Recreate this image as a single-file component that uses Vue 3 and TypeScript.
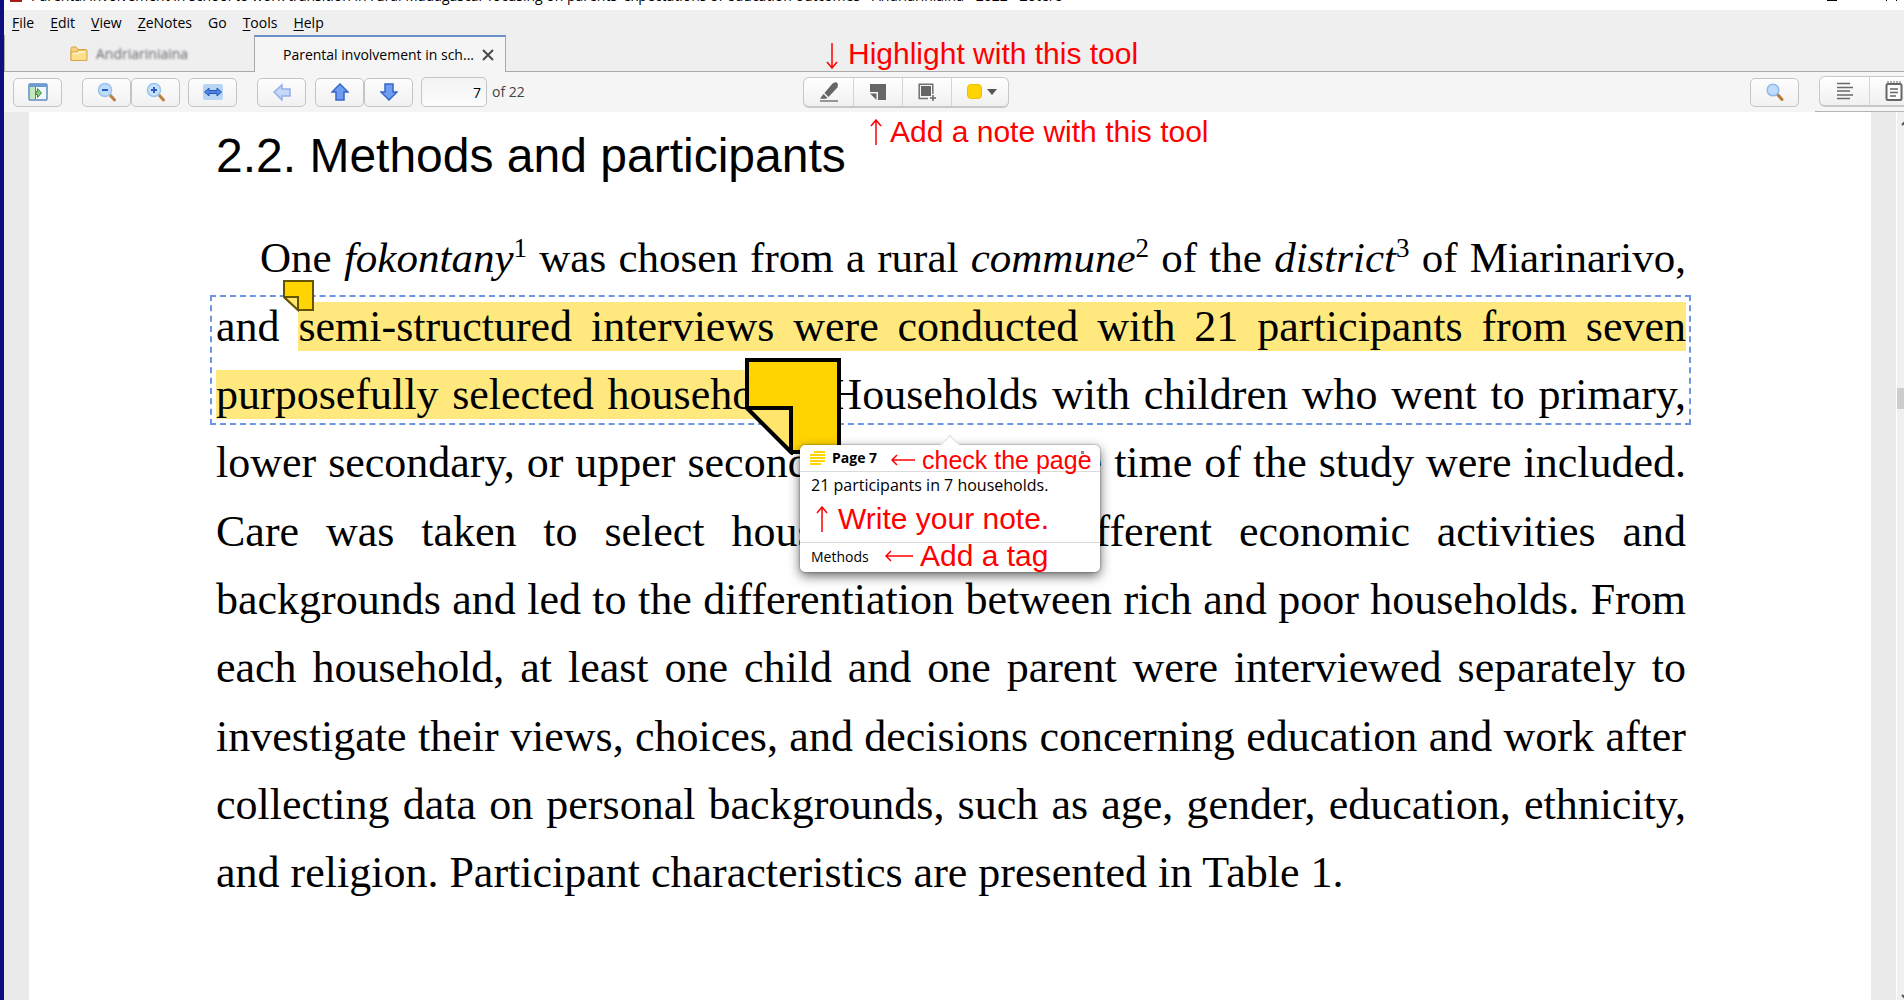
<script setup lang="ts">
import { ref } from 'vue'

interface MenuEntry {
  key: string
  rest: string
}

const menu: MenuEntry[] = [
  { key: 'F', rest: 'ile' },
  { key: 'E', rest: 'dit' },
  { key: 'V', rest: 'iew' },
  { key: 'Z', rest: 'eNotes' },
  { key: '', rest: 'Go' },
  { key: 'T', rest: 'ools' },
  { key: 'H', rest: 'elp' },
]

const pageNumber = ref('7')

const closingLines: string[] = [
  'lower secondary, or upper secondary school at the time of the study were included.',
  'Care was taken to select households with different economic activities and',
  'backgrounds and led to the differentiation between rich and poor households. From',
  'each household, at least one child and one parent were interviewed separately to',
  'investigate their views, choices, and decisions concerning education and work after',
  'collecting data on personal backgrounds, such as age, gender, education, ethnicity,',
  'and religion. Participant characteristics are presented in Table 1.',
]
</script>

<template>
  <div class="app">
    <header class="titlebar">
      <span class="app-icon"></span>
      <span class="title">Parental involvement in school to work transition in rural Madagascar focusing on parents’ expectations of education outcomes - Andriariniaina - 2022 - Zotero</span>
      <span class="minimise"></span>
      <span class="maximise"></span>
    </header>

    <nav class="menubar">
      <a v-for="m in menu" :key="m.rest" href="#"><u v-if="m.key">{{ m.key }}</u>{{ m.rest }}</a>
    </nav>

    <div class="tabs">
      <button class="tab library">
        <svg width="18" height="16" viewBox="0 0 18 16">
          <path d="M1 14.500V2.500Q1 1 2.500 1H6l2 2.500h7.500V5" fill="#f6d27c" stroke="#d9a441" />
          <path d="M1 14.500V6h6l1.500-2H17v10.500z" fill="#fbe08c" stroke="#d9a441" />
          <path d="M3 7.500h5L9.500 6H15" fill="none" stroke="#fff6cf" stroke-width="1.500" />
        </svg>
        <span class="blurred">Andriariniaina</span>
      </button>
      <div class="tab active">
        <span>Parental involvement in sch...</span>
        <button class="close" aria-label="Close tab">
          <svg width="12" height="12" viewBox="0 0 12 12"><path d="M1 1l10 10M11 1L1 11" stroke="#4a4a4a" stroke-width="2" /></svg>
        </button>
      </div>
      <div class="tab-rest"></div>
    </div>

    <div class="toolbar">
      <button class="btn" aria-label="Toggle sidebar">
        <svg width="20" height="18" viewBox="0 0 20 18">
          <rect x="1" y="1" width="18" height="16" rx="1" fill="#f2f7fc" stroke="#5f8cc0" stroke-width="1.500" />
          <path d="M1 2.500h18" stroke="#6d9bd0" stroke-width="3" />
          <rect x="2" y="4" width="5" height="12" fill="#c4e8bb" />
          <path d="M7.500 4v12" stroke="#4b9648" />
          <path d="M8 8.500h1.500V5.500l4 4.500-4 4.500v-3H8z" fill="#8ccb80" stroke="#43913f" />
        </svg>
      </button>
      <div class="pair zoom">
        <button class="btn" aria-label="Zoom out">
          <svg width="20" height="20" viewBox="0 0 20 20">
            <path d="M13 13l4.500 5" stroke="#bd8045" stroke-width="3" stroke-linecap="round" />
            <circle cx="8" cy="8" r="6.500" fill="#bfdcfa" stroke="#9dc4ef" stroke-width="1.500" />
            <path d="M5 8h6" stroke="#285fc0" stroke-width="2" />
          </svg>
        </button>
        <button class="btn" aria-label="Zoom in">
          <svg width="20" height="20" viewBox="0 0 20 20">
            <path d="M13 13l4.500 5" stroke="#bd8045" stroke-width="3" stroke-linecap="round" />
            <circle cx="8" cy="8" r="6.500" fill="#c8e0fa" stroke="#9dc4ef" stroke-width="1.500" />
            <path d="M5 8h6M8 5v6" stroke="#285fc0" stroke-width="2" />
          </svg>
        </button>
      </div>
      <button class="btn fit" aria-label="Fit width">
        <svg width="20" height="18" viewBox="0 0 20 18">
          <rect x="0" y="1" width="20" height="16" rx="2" fill="#b9d5f5" />
          <path d="M1.500 9L6 5v2.500h8V5l4.500 4-4.500 4v-2.500H6V13z" fill="#4f83dc" stroke="#2357b8" />
        </svg>
      </button>
      <button class="btn back" aria-label="Back">
        <svg width="18" height="18" viewBox="0 0 18 18"><path d="M1 9l8-7v4h8v7H9v4z" fill="#c6d8f7" stroke="#93aee6" stroke-width="1.500" /></svg>
      </button>
      <div class="pair pages">
        <button class="btn" aria-label="Previous page">
          <svg width="18" height="18" viewBox="0 0 18 18"><path d="M9 1l8 8h-4v8H5V9H1z" fill="#6f9df0" stroke="#3467c9" stroke-width="1.500" /></svg>
        </button>
        <button class="btn" aria-label="Next page">
          <svg width="18" height="18" viewBox="0 0 18 18"><path d="M9 17L1 9h4V1h8v8h4z" fill="#6f9df0" stroke="#3467c9" stroke-width="1.500" /></svg>
        </button>
      </div>
      <input id="page" v-model="pageNumber" class="page-input" type="text" />
      <label for="page" class="page-label">of 22</label>

      <div class="group">
        <button aria-label="Highlight text">
          <svg width="20" height="20" viewBox="0 0 20 20">
            <path d="M13.500 1.500L17 0l2 2-.500 3.500L9.500 15l-4-4z" fill="#666" />
            <path d="M4.500 12l4 4-2 .800H1z" fill="#666" />
            <path d="M1 19h18" stroke="#777" stroke-width="1.500" />
          </svg>
        </button>
        <button aria-label="Add note">
          <svg width="16" height="16" viewBox="0 0 16 16"><path d="M0 0h16v16H8V8H0z" fill="#666" /><path d="M0 9.500h6.500V16z" fill="#666" /></svg>
        </button>
        <button aria-label="Select area">
          <svg width="18" height="18" viewBox="0 0 18 18">
            <path d="M10 15.500H1.200V1.200h13.600V11" fill="none" stroke="#707070" stroke-width="1.500" />
            <rect x="3" y="3" width="10" height="10" fill="#666" />
            <path d="M15 12v6M12 15h6" stroke="#666" stroke-width="1.500" />
          </svg>
        </button>
        <button class="colour" aria-label="Annotation colour">
          <span class="swatch"></span>
          <svg width="10" height="6" viewBox="0 0 10 6"><path d="M0 0h10L5 6z" fill="#555" /></svg>
        </button>
      </div>

      <div class="right-tools">
        <button class="btn" aria-label="Find">
          <svg width="18" height="18" viewBox="0 0 18 18">
            <path d="M12 12l4 4.500" stroke="#b77a33" stroke-width="3" stroke-linecap="round" />
            <circle cx="7" cy="7" r="5.800" fill="#bfdcfa" stroke="#8fb9ea" stroke-width="1.500" />
          </svg>
        </button>
        <div class="side-switch">
          <div class="group side">
            <button aria-label="Item info">
              <svg width="16" height="18" viewBox="0 0 16 18">
                <path d="M0 1.500h13M0 5.500h16M0 9h13M0 13h16M0 16.500h13" stroke="#6a6a6a" stroke-width="1.500" />
              </svg>
            </button>
            <button aria-label="Notes">
              <svg width="18" height="20" viewBox="0 0 18 20">
                <rect x="1.500" y="3" width="15" height="16" rx="1.500" fill="#fff" stroke="#666" stroke-width="2" />
                <path d="M3 0v4M6 0v4M9 0v4M12 0v4M15 0v4" stroke="#666" />
                <path d="M5 8h8M5 11.500h8M5 15h6" stroke="#666" stroke-width="1.500" />
              </svg>
            </button>
          </div>
        </div>
      </div>
    </div>

    <main class="viewer">
      <article class="paper">
        <h1>2.2. Methods and participants</h1>
        <p>
          <span class="line first">One <i>fokontany</i><sup>1</sup> was chosen from a rural <i>commune</i><sup>2</sup> of the <i>district</i><sup>3</sup> of Miarinarivo,</span>
          <span class="line">and <mark>semi-structured interviews were conducted with 21 participants from seven</mark></span>
          <span class="line"><mark>purposefully selected households.</mark> Households with children who went to primary,</span>
          <span v-for="l in closingLines" :key="l" class="line">{{ l }}</span>
        </p>
        <div class="selection"></div>
      </article>
      <div class="scrollbar">
        <svg width="7" height="6" viewBox="0 0 7 6"><path d="M5 5l4-4 4 4" fill="none" stroke="#555" stroke-width="2" /></svg>
        <span class="thumb"></span>
        <svg class="down" width="7" height="6" viewBox="0 0 7 6"><path d="M5 1l4 4 4-4" fill="none" stroke="#555" stroke-width="2" /></svg>
      </div>

      <svg class="sticky small" width="32" height="32" viewBox="0 0 32 32">
        <path d="M1 1h29v29H15L1 17z" fill="#ffd400" stroke="#665500" stroke-width="2" />
        <path d="M1 17h14v13z" fill="#ffe66b" stroke="#665500" stroke-width="2" />
      </svg>
      <svg class="sticky large" width="97" height="97" viewBox="0 0 97 97">
        <path d="M2 2h92v92H46L2 50z" fill="#ffd400" stroke="#000" stroke-width="4" />
        <path d="M2 50h44v44z" fill="#ffe56b" stroke="#000" stroke-width="4" />
      </svg>

      <section class="popup">
        <header>
          <svg width="15" height="14" viewBox="0 0 15 14"><path d="M4 1h11M0 4h15M0 7h15M0 10h15M0 13h11" stroke="#ffd400" stroke-width="2" /></svg>
          <b>Page 7</b>
          <span class="dots"></span>
        </header>
        <div class="note">21 participants in 7 households.</div>
        <footer>Methods</footer>
      </section>
    </main>

    <div class="callout c-highlight">
      <svg width="12" height="26" viewBox="0 0 12 26"><path d="M6 0v25M1 19l5 6 5-6" /></svg>
      <span>Highlight with this tool</span>
    </div>
    <div class="callout c-add">
      <svg width="12" height="26" viewBox="0 0 12 26"><path d="M6 26V1M1 7l5-6 5 6" /></svg>
      <span>Add a note with this tool</span>
    </div>
    <div class="callout c-page">
      <svg width="24" height="12" viewBox="0 0 24 12"><path d="M24 6H1M6 1L1 6l5 5" /></svg>
      <span>check the page</span>
    </div>
    <div class="callout c-write">
      <svg width="12" height="26" viewBox="0 0 12 26"><path d="M6 26V1M1 7l5-6 5 6" /></svg>
      <span>Write your note.</span>
    </div>
    <div class="callout c-tag">
      <svg width="28" height="12" viewBox="0 0 28 12"><path d="M28 6H1M6 1L1 6l5 5" /></svg>
      <span>Add a tag</span>
    </div>
  </div>
</template>

<style>
body {
  margin: 0;
  overflow: hidden;
}
</style>

<style scoped>
.app {
  position: relative;
  display: flex;
  flex-direction: column;
  box-sizing: border-box;
  height: 100vh;
  overflow: hidden;
  border-left: 4px solid #0e0e80;
  background: #f5f5f5;
  color: #000;
  font: 14px/20px "Open Sans", "Noto Sans", sans-serif;
}
button {
  box-sizing: border-box;
  margin: 0;
  padding: 0;
  border: 0;
  background: none;
  color: inherit;
  font: inherit;
}
svg {
  display: block;
  flex: none;
}

.titlebar {
  display: flex;
  align-items: flex-start;
  flex: none;
  height: 10px;
  padding: 0 7px 0 6px;
  background: #fff;
}
.app-icon {
  width: 12px;
  height: 2px;
  background: #a51c1c;
}
.title {
  flex: 1;
  margin: -14px 0 0 9px;
  white-space: nowrap;
}
.minimise {
  width: 10px;
  height: 1px;
  margin-right: 49px;
  background: #000;
}
.maximise {
  box-sizing: border-box;
  width: 11px;
  height: 1px;
  border: solid #000;
  border-width: 0 1px;
}

.menubar {
  display: flex;
  gap: 16px;
  flex: none;
  height: 22px;
  padding: 3px 8px 0;
  background: #efefef;
}
.menubar a {
  color: #000;
  text-decoration: none;
}
.menubar u {
  text-underline-offset: 2px;
}

.tabs {
  display: flex;
  flex: none;
  height: 37px;
  background: #efefef;
}
.tab {
  display: flex;
  align-items: center;
  box-sizing: border-box;
  width: 252px;
}
.library {
  gap: 8px;
  width: 250px;
  padding: 2px 0 0 65px;
  border-left: 1px solid #a9a9a9;
  border-bottom: 1px solid #a9a9a9;
}
.blurred {
  color: #666670;
  filter: blur(1px);
}
.active {
  justify-content: flex-end;
  gap: 8px;
  padding-right: 11px;
  border: solid #a9a9a9;
  border-width: 2px 1px 0;
  border-top-color: #6a8cc7;
  background: #f5f5f5;
  white-space: nowrap;
}
.tab-rest {
  flex: 1;
  border-bottom: 1px solid #a9a9a9;
}

.toolbar {
  display: flex;
  align-items: center;
  flex: none;
  height: 40px;
  padding-left: 9px;
}
.btn {
  display: flex;
  align-items: center;
  justify-content: center;
  flex: none;
  width: 49px;
  height: 29px;
  border: 1px solid #c4c4c4;
  border-radius: 5px;
  background: linear-gradient(#fdfdfd, #f1f1f1);
}
.pair {
  display: flex;
}
.zoom {
  margin-left: 20px;
}
.fit {
  margin-left: 8px;
}
.back {
  margin-left: 20px;
}
.pages {
  margin-left: 9px;
}
.page-input {
  box-sizing: border-box;
  width: 66px;
  height: 30px;
  margin: 0 5px 0 8px;
  padding: 0 5px;
  border: 1px solid #c4c4c4;
  border-radius: 5px;
  background: linear-gradient(#f3f3f3, #fcfcfc);
  font: inherit;
  text-align: right;
}
.page-label {
  width: 46px;
  color: #444;
}
.group {
  display: flex;
  box-sizing: border-box;
  height: 31px;
  margin-left: 265px;
  border: 1px solid #c8c8c8;
  border-bottom-width: 2px;
  border-radius: 6px;
  background: linear-gradient(#fff, #f0f0f0);
}
.group button {
  display: flex;
  align-items: center;
  justify-content: center;
  width: 49px;
}
.group button + button {
  border-left: 1px solid #d4d4d4;
}
.group .colour {
  gap: 5px;
  width: 57px;
  padding-left: 3px;
}
.swatch {
  box-sizing: border-box;
  width: 15px;
  height: 15px;
  border: 1px solid #e8c100;
  border-radius: 4px;
  background: #ffd400;
}
.right-tools {
  display: flex;
  align-self: stretch;
  align-items: center;
  margin-left: auto;
}
.side-switch {
  display: flex;
  align-items: center;
  align-self: stretch;
  box-sizing: border-box;
  width: 89px;
  margin-left: 16px;
  padding-left: 4px;
  border-bottom: 1px solid #b4b4b4;
  overflow: hidden;
}
.group.side {
  flex: none;
  margin-left: 0;
}

.viewer {
  position: relative;
  display: flex;
  flex: 1;
  min-height: 0;
  background: #eaeaea;
}
.paper {
  position: relative;
  flex: 1;
  min-width: 0;
  margin: 0 25px;
  padding: 14px 185px 0 187px;
  background: #fff;
}
h1 {
  margin: 0;
  font: 48px/60px "Liberation Sans", Arial, sans-serif;
}
p {
  margin: 38px 0 0;
  font: 44px/68px "Liberation Serif", "Times New Roman", serif;
}
.line {
  display: block;
  text-align: justify;
  text-align-last: justify;
  white-space: nowrap;
}
.line:nth-child(3n + 1) {
  margin-bottom: 1px;
}
.line:last-child {
  text-align-last: left;
}
.first {
  padding-left: 44px;
  font-size: 43px;
}
sup {
  font-size: 27px;
  line-height: 0;
  vertical-align: 15px;
}
mark {
  background: #ffe97f;
  color: inherit;
}
.selection {
  position: absolute;
  top: 183px;
  left: 181px;
  right: 180px;
  box-sizing: border-box;
  height: 130px;
  border: 2px dashed #6d95e0;
}
.scrollbar {
  display: flex;
  flex-direction: column;
  box-sizing: border-box;
  width: 8px;
  padding-top: 8px;
  border-left: 1px solid #fff;
  background: #f0f0f0;
}
.thumb {
  height: 21px;
  margin-top: 262px;
  background: #cdcdcd;
}
.down {
  margin-top: auto;
}

.sticky {
  position: absolute;
}
.small {
  top: 168px;
  left: 279px;
}
.large {
  top: 246px;
  left: 741px;
}

.popup {
  position: absolute;
  top: 333px;
  left: 796px;
  width: 300px;
  border-radius: 5px;
  background: #fff;
  box-shadow: 0 4px 12px rgba(0, 0, 0, 0.6), 0 0 2px rgba(0, 0, 0, 0.5);
}
.popup::before {
  content: "";
  position: absolute;
  top: -7px;
  left: 143px;
  width: 14px;
  height: 14px;
  border: solid #e0e0e0;
  border-width: 1px 0 0 1px;
  box-sizing: border-box;
  background: #fff;
  transform: rotate(45deg);
}
.popup header {
  position: relative;
  display: flex;
  align-items: center;
  gap: 7px;
  height: 26px;
  padding: 0 16px 0 10px;
  border-bottom: 1px solid #dadada;
}
.popup b {
  flex: 1;
}
.dots {
  width: 3px;
  height: 12px;
  border-top: 3px dotted #888;
}
.note {
  height: 62px;
  padding: 3px 11px 5px;
  font-size: 16px;
}
.popup footer {
  padding: 4px 11px 5px;
  border-top: 1px solid #dadada;
}

.callout {
  position: absolute;
  display: flex;
  align-items: center;
  color: #f00;
  font: 30px/30px "Liberation Sans", Arial, sans-serif;
  white-space: nowrap;
}
.callout path {
  fill: none;
  stroke: #f00;
  stroke-width: 1.500px;
}
.c-highlight {
  top: 39px;
  left: 822px;
  gap: 10px;
  align-items: flex-end;
}
.c-add {
  top: 117px;
  left: 866px;
  gap: 8px;
}
.c-page {
  top: 445px;
  left: 887px;
  gap: 7px;
  font-size: 25px;
}
.c-write {
  top: 504px;
  left: 812px;
  gap: 10px;
}
.c-tag {
  top: 541px;
  left: 881px;
  gap: 7px;
}
</style>
